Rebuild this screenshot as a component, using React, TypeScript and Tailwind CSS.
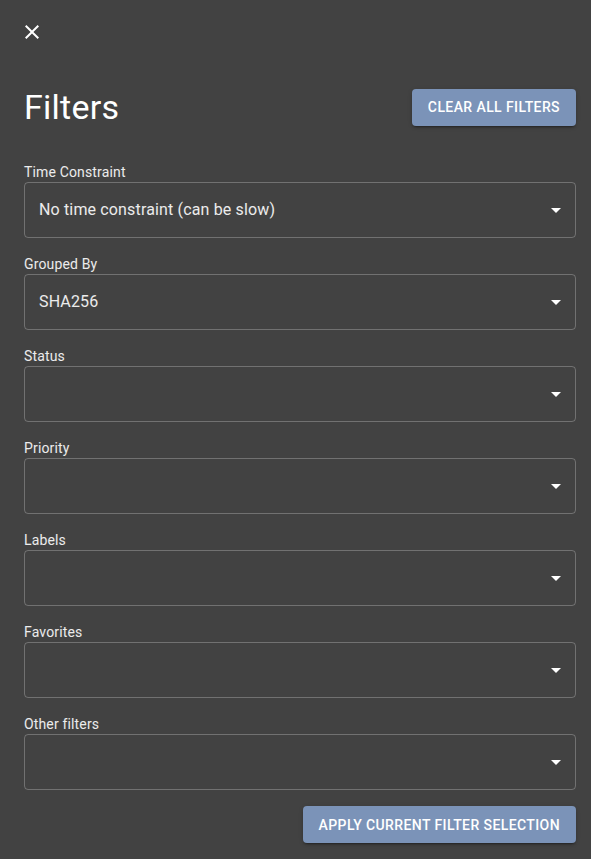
const fields: { label: string; value?: string }[] = [
  { label: "Time Constraint", value: "No time constraint (can be slow)" },
  { label: "Grouped By", value: "SHA256" },
  { label: "Status" },
  { label: "Priority" },
  { label: "Labels" },
  { label: "Favorites" },
  { label: "Other filters" },
];

const buttonClass =
  "h-[37px] rounded bg-[#7b93b8] px-4 text-sm font-medium uppercase tracking-[0.4px] text-white shadow-[0_3px_1px_-2px_rgba(0,0,0,0.2),0_2px_2px_0_rgba(0,0,0,0.14),0_1px_5px_0_rgba(0,0,0,0.12)]";

function SelectField({ label, value }: { label: string; value?: string }) {
  return (
    <div className="mt-4 first:mt-0">
      <div className="flex h-5 items-center text-sm tracking-[0.15px] text-white/90">{label}</div>
      <div className="relative flex h-14 items-center rounded border border-white/25 pl-[14px] pr-8 text-base tracking-[0.15px] text-white/90">
        <span>{value}</span>
        <svg viewBox="0 0 24 24" className="absolute right-[7px] top-1/2 size-6 -translate-y-1/2 fill-white">
          <path d="M7 10l5 5 5-5z" />
        </svg>
      </div>
    </div>
  );
}

export default function App() {
  return (
    <div className="min-h-[859px] bg-[#424242] pl-6 pr-[15px] pt-5 pb-4 font-['Roboto',sans-serif] text-white">
      <button type="button" aria-label="Close" className="-ml-1 block size-6 text-white">
        <svg viewBox="0 0 24 24" className="size-6 fill-white">
          <path d="M19 6.41 17.59 5 12 10.59 6.41 5 5 6.41 10.59 12 5 17.59 6.41 19 12 13.41 17.59 19 19 17.59 13.41 12z" />
        </svg>
      </button>
      <div className="mt-[42px] flex h-[42px] items-center justify-between">
        <h1 className="text-[34px] leading-[42px] font-normal tracking-[0.25px]">Filters</h1>
        <button type="button" className={buttonClass}>
          Clear all filters
        </button>
      </div>
      <div className="mt-[34px] flex flex-col">
        {fields.map((f) => (
          <SelectField key={f.label} label={f.label} value={f.value} />
        ))}
      </div>
      <div className="mt-4 flex justify-end">
        <button type="button" className={buttonClass}>
          Apply current filter selection
        </button>
      </div>
    </div>
  );
}
